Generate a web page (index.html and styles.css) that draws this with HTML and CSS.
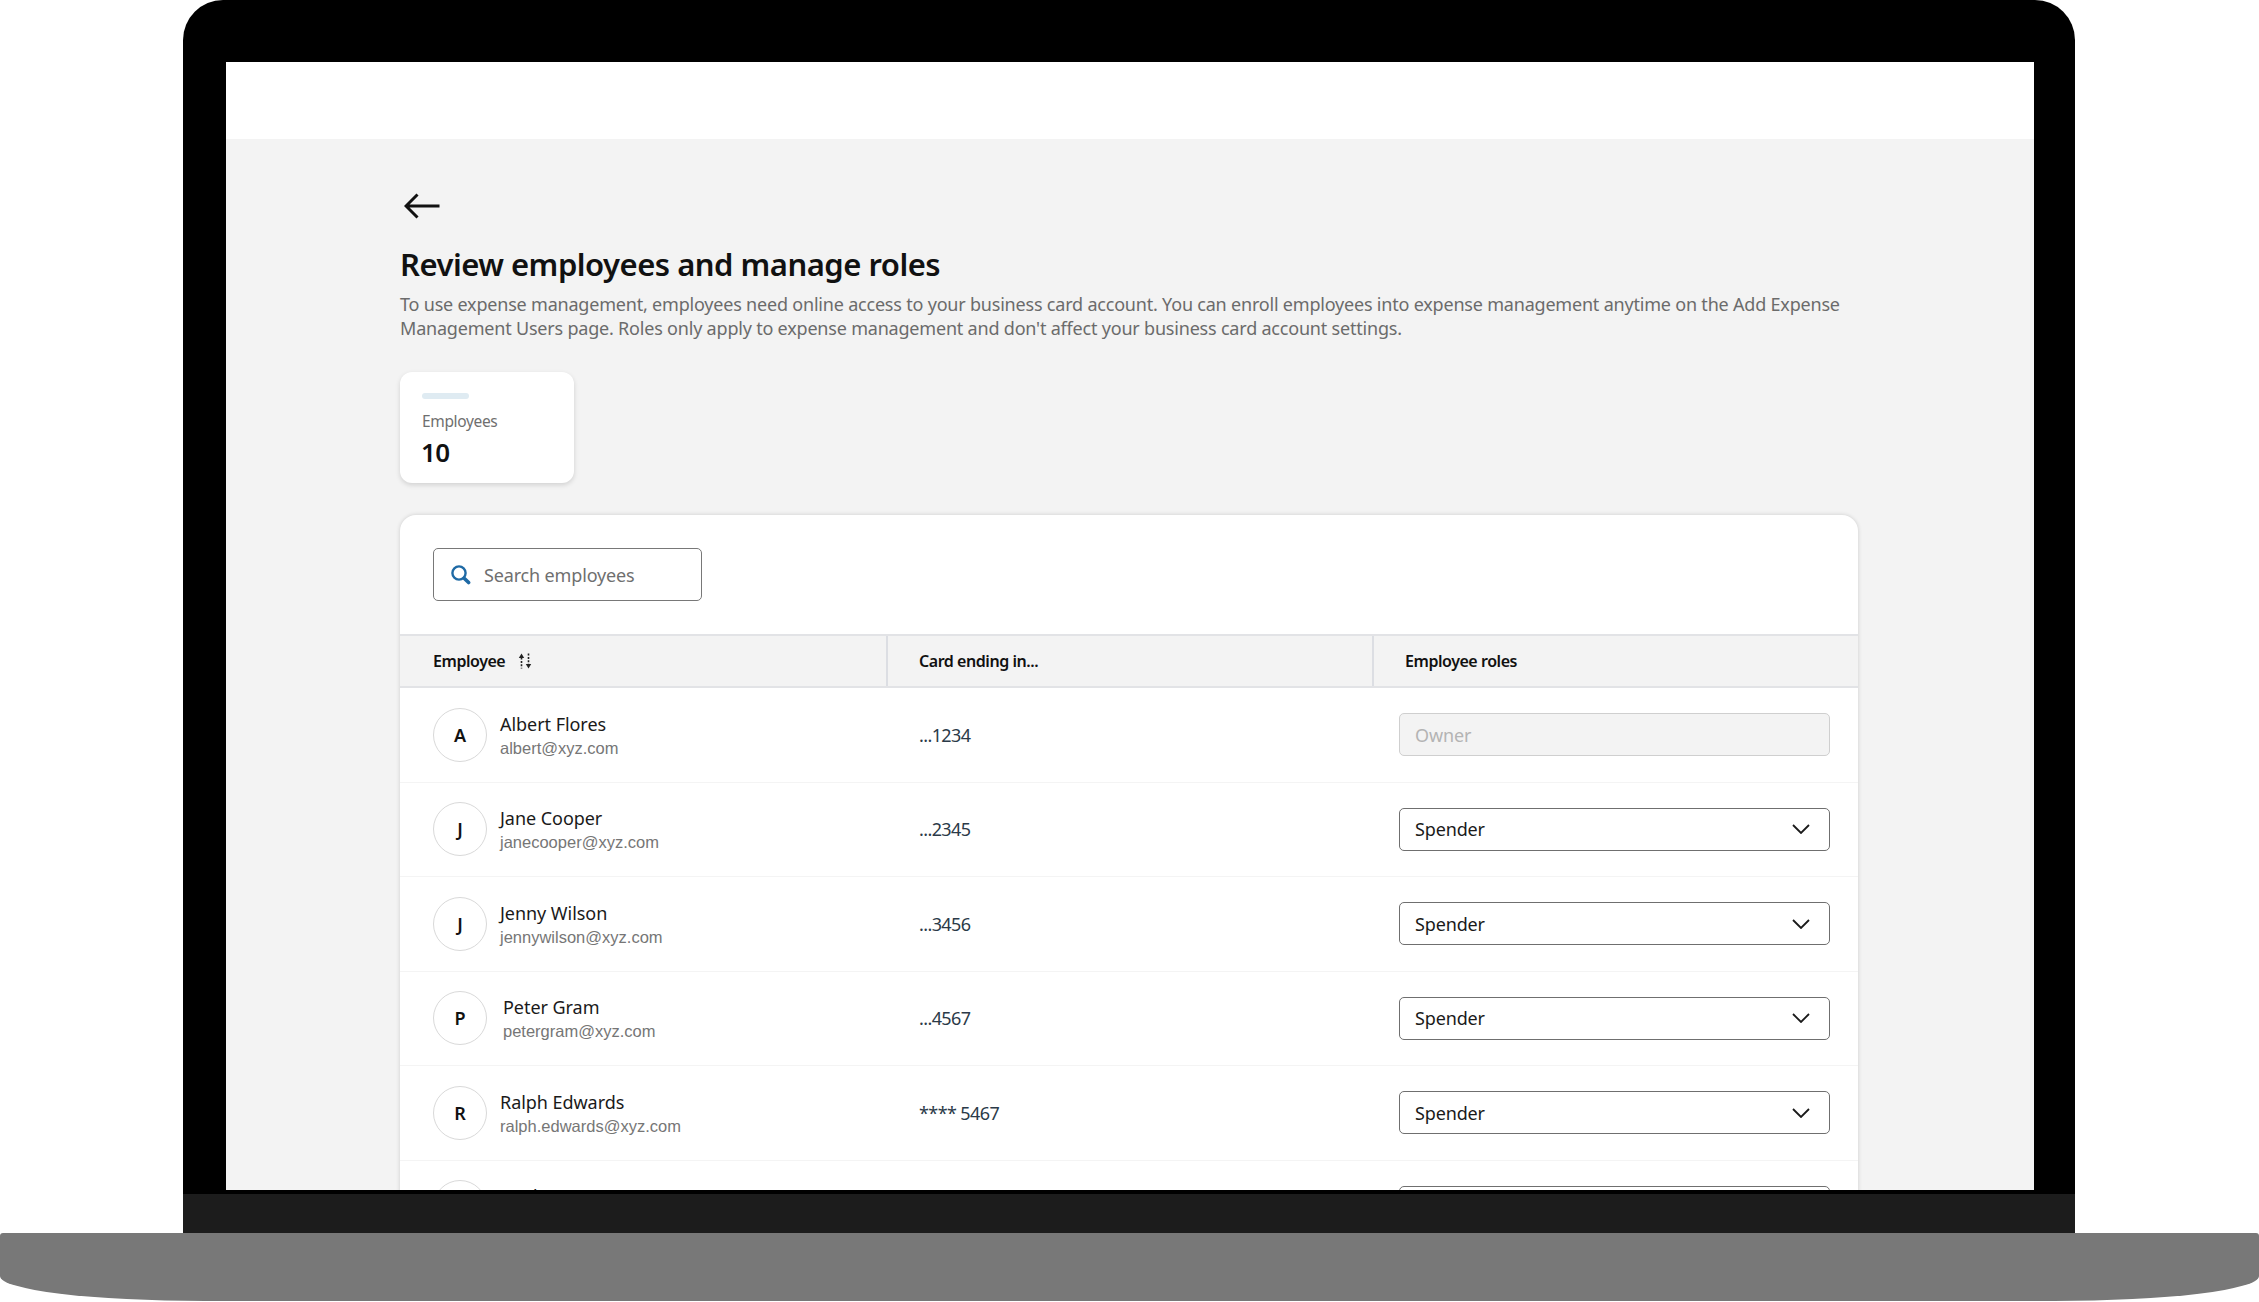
FILE: index.html
```html
<!DOCTYPE html>
<html lang="en">
<head>
<meta charset="utf-8">
<title>Review employees and manage roles</title>
<link rel="stylesheet" href="styles.css">
</head>
<body>
<div class="laptop">
  <div class="bezel">
    <div class="screen">
      <div class="topbar"></div>
      <main class="page">
        <svg class="back" viewBox="0 0 36 26" width="36" height="26" aria-hidden="true"><path d="M35.5 13H2M13.5 1.5 2 13l11.5 11.5"/></svg>
        <h1 class="title">Review employees and manage roles</h1>
        <p class="intro">To use expense management, employees need online access to your business card account. You can enroll employees into expense management anytime on the Add Expense Management Users page. Roles only apply to expense management and don't affect your business card account settings.</p>
        <div class="stat">
          <div class="stat-bar"></div>
          <div class="stat-label">Employees</div>
          <div class="stat-value">10</div>
        </div>
        <section class="panel">
          <div class="toolbar">
            <div class="search">
              <svg class="search-icon" viewBox="0 0 20 20" width="20" height="20" aria-hidden="true"><circle cx="8" cy="8" r="6.6"/><path d="M13.4 13.4l4.2 4.2"/></svg>
              <span>Search employees</span>
            </div>
          </div>
          <div class="row head">
            <div class="cell">Employee
              <svg class="sort" viewBox="0 0 16 16" width="16" height="16" aria-hidden="true"><path class="dots" d="M4.5 4.5v11"/><path class="tip" d="M4.5 0.5 1.8 5h5.4z"/><path class="dots" d="M11.5 0.5v11"/><path class="tip" d="M11.5 15.5 8.8 11h5.4z"/></svg>
            </div>
            <div class="cell">Card ending in...</div>
            <div class="cell">Employee roles</div>
          </div>
          <div class="row">
            <div class="cell person"><div class="avatar">A</div><div><div class="name">Albert Flores</div><div class="email">albert@xyz.com</div></div></div>
            <div class="cell num">...1234</div>
            <div class="cell"><div class="select disabled">Owner</div></div>
          </div>
          <div class="row">
            <div class="cell person"><div class="avatar">J</div><div><div class="name">Jane Cooper</div><div class="email">janecooper@xyz.com</div></div></div>
            <div class="cell num">...2345</div>
            <div class="cell"><div class="select">Spender<svg class="chev" viewBox="0 0 18 10" width="18" height="10" aria-hidden="true"><path d="M1 1l8 8 8-8"/></svg></div></div>
          </div>
          <div class="row">
            <div class="cell person"><div class="avatar">J</div><div><div class="name">Jenny Wilson</div><div class="email">jennywilson@xyz.com</div></div></div>
            <div class="cell num">...3456</div>
            <div class="cell"><div class="select">Spender<svg class="chev" viewBox="0 0 18 10" width="18" height="10" aria-hidden="true"><path d="M1 1l8 8 8-8"/></svg></div></div>
          </div>
          <div class="row">
            <div class="cell person wide"><div class="avatar">P</div><div><div class="name">Peter Gram</div><div class="email">petergram@xyz.com</div></div></div>
            <div class="cell num">...4567</div>
            <div class="cell"><div class="select">Spender<svg class="chev" viewBox="0 0 18 10" width="18" height="10" aria-hidden="true"><path d="M1 1l8 8 8-8"/></svg></div></div>
          </div>
          <div class="row">
            <div class="cell person"><div class="avatar">R</div><div><div class="name">Ralph Edwards</div><div class="email">ralph.edwards@xyz.com</div></div></div>
            <div class="cell num">**** 5467</div>
            <div class="cell"><div class="select">Spender<svg class="chev" viewBox="0 0 18 10" width="18" height="10" aria-hidden="true"><path d="M1 1l8 8 8-8"/></svg></div></div>
          </div>
          <div class="row">
            <div class="cell person"><div class="avatar">W</div><div><div class="name">Wade Warren</div><div class="email">wade@xyz.com</div></div></div>
            <div class="cell num">...6789</div>
            <div class="cell"><div class="select">Spender<svg class="chev" viewBox="0 0 18 10" width="18" height="10" aria-hidden="true"><path d="M1 1l8 8 8-8"/></svg></div></div>
          </div>
        </section>
      </main>
    </div>
    <div class="hinge"></div>
  </div>
  <div class="base"></div>
</div>
</body>
</html>
```
FILE: styles.css
```css
* { box-sizing: border-box; }
html, body { margin: 0; background: #fff; }
body {
  width: 2259px;
  height: 1302px;
  overflow: hidden;
  font-family: "Noto Sans", "Open Sans", sans-serif;
  color: #1a1a1a;
}
.laptop { display: flex; flex-direction: column; height: 1302px; }
.bezel {
  margin: 0 184px 0 183px;
  height: 1233px;
  background: #000;
  border-radius: 40px 40px 0 0;
  padding: 62px 41px 0 43px;
  display: flex;
  flex-direction: column;
}
.screen { height: 1128px; overflow: hidden; background: #f3f3f3; flex: none; }
.hinge { margin: 4px -41px 0 -43px; height: 39px; background: #1c1c1c; }
.base {
  height: 68px;
  background: #787878;
  border-radius: 3px 3px 205px 205px / 3px 3px 25px 25px;
}
.topbar { height: 77px; background: #fff; }
.page { padding: 54px 176px 0 174px; display: flex; flex-direction: column; align-items: flex-start; }
.back { fill: none; stroke: #111; stroke-width: 3; margin-left: 4px; display: block; }
.title {
  margin: 23px 0 0;
  font-size: 31px;
  line-height: 44px;
  font-weight: 600;
  letter-spacing: -.5px;
  color: #111;
}
.intro {
  margin: 6px 0 0;
  width: 1458px;
  font-size: 18px;
  line-height: 24px;
  letter-spacing: -.2px;
  color: #6b6b6b;
}
.stat {
  margin-top: 32px;
  width: 174px;
  height: 111px;
  padding: 21px 22px 0;
  background: #fff;
  border-radius: 12px;
  box-shadow: 0 2px 5px rgba(0,0,0,.14);
}
.stat-bar { width: 47px; height: 6px; border-radius: 3px; background: #dfebf2; }
.stat-label { margin-top: 10px; font-size: 15.5px; line-height: 24px; letter-spacing: -.35px; color: #6f6f6f; }
.stat-value { margin: 4px 0 0 -1px; font-size: 26px; line-height: 30px; font-weight: 600; letter-spacing: -.5px; color: #111; }
.panel {
  margin-top: 32px;
  align-self: stretch;
  background: #fff;
  border-radius: 16px 16px 0 0;
  box-shadow: 0 0 4px rgba(0,0,0,.16);
}
.toolbar { padding: 33px; }
.search {
  width: 269px;
  height: 53px;
  border: 1.5px solid #787878;
  border-radius: 5px;
  padding-left: 17px;
  display: flex;
  align-items: center;
  gap: 13px;
  font-size: 18px;
  letter-spacing: -.15px;
  color: #6f6f6f;
}
.search-icon { fill: none; stroke: #1f6aa5; stroke-width: 2.4; flex: none; }
.search-icon path { stroke-width: 3.6; stroke-linecap: round; }
.row {
  display: grid;
  grid-template-columns: 486px 486px 486px;
  height: 94.5px;
  border-bottom: 1.5px solid #f4f4f4;
  align-items: center;
}
.cell { padding-left: 33px; min-width: 0; }
.row.head {
  height: 54px;
  background: #f3f3f3;
  border-top: 2px solid #e2e3e6;
  border-bottom: 2px solid #e2e3e6;
  align-items: stretch;
  font-size: 16px;
  font-weight: 600;
  letter-spacing: -.45px;
  color: #111;
}
.head .cell { display: flex; align-items: center; gap: 12px; }
.head .cell + .cell { border-left: 2px solid #dcdee3; padding-left: 31px; }
.sort { display: block; }
.sort .tip { fill: #222; }
.sort .dots { stroke: #222; stroke-width: 1.6; stroke-dasharray: 2 1.4; fill: none; }
.person { display: flex; align-items: center; gap: 13px; }
.person.wide { gap: 16px; }
.avatar {
  width: 54px;
  height: 54px;
  flex: none;
  border: 1.5px solid #d9d9d9;
  border-radius: 50%;
  display: flex;
  align-items: center;
  justify-content: center;
  font-size: 18px;
  font-weight: 600;
  color: #111;
}
.name { padding-top: 2px; font-size: 18px; line-height: 24px; letter-spacing: -.05px; color: #1a1a1a; }
.email { font-family: "Liberation Sans", Arial, sans-serif; font-size: 16.5px; line-height: 24px; color: #767676; }
.num { font-size: 18px; letter-spacing: -.6px; color: #2b3a48; }
.select {
  margin-left: -6px;
  width: 431px;
  height: 43px;
  border: 1.5px solid #6f6f6f;
  border-radius: 5px;
  padding: 0 19px 0 15px;
  display: flex;
  align-items: center;
  justify-content: space-between;
  font-size: 18px;
  letter-spacing: -.15px;
  color: #1a1a1a;
}
.select.disabled { background: #f3f3f3; border-color: #cfcfcf; color: #b4b4b4; }
.chev { fill: none; stroke: #1a1a1a; stroke-width: 1.8; display: block; }
```
